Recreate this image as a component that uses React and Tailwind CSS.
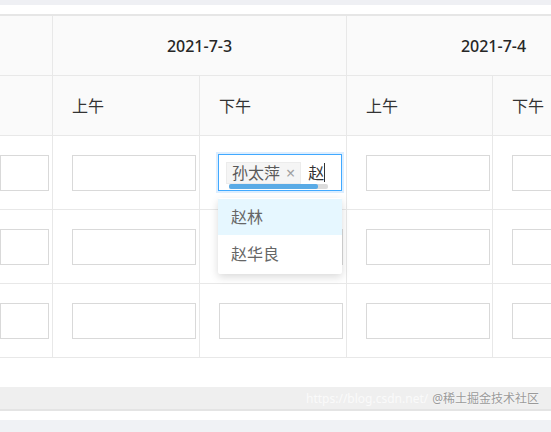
import React from "react";

const font = { fontFamily: '"Noto Sans", "Noto Sans CJK SC", sans-serif' };

function Input() {
  return <div className="w-[124px] h-[36px] border border-[#d9d9d9] bg-white" />;
}

function BodyCell({ children, last }) {
  return (
    <div className={`relative h-[74px] border-b border-[#e8e8e8] ${last ? "" : "border-r"} pl-[19px] pt-[19px] bg-white`}>
      {children}
    </div>
  );
}

function FirstCell() {
  return (
    <div className="h-[74px] border-b border-r border-[#e8e8e8] pt-[19px] bg-white flex justify-end pr-[3px]">
      <div className="w-[60px] h-[36px] border border-[#d9d9d9] bg-white" />
    </div>
  );
}

function SelectCell() {
  return (
    <div className="relative h-[74px] border-b border-r border-[#e8e8e8] pl-[18px] pt-[18px] bg-white">
      <div className="relative w-[124px] h-[37px] border border-[#40a9ff] shadow-[0_0_0_2px_rgba(24,144,255,0.15)] bg-white flex items-center pl-[7px]">
        <div className="h-[22px] px-[5px] bg-[#f5f5f5] border border-[#ececec] flex items-center gap-[6px] text-[16px] leading-none text-[#595959]">
          <span>孙太萍</span>
          <span className="text-[16px] text-[#a0a0a0]">×</span>
        </div>
        <span className="ml-[7px] text-[16px] leading-none text-[#333]">赵</span>
        <span className="w-[1px] h-[19px] bg-[#333]" />
        <div className="absolute left-[10px] top-[29px] w-[99px] h-[5px] rounded-[2px] bg-[#dcdcdc]" />
        <div className="absolute left-[10px] top-[29px] w-[89px] h-[5px] rounded-[2px] bg-[#5aabe6]" />
      </div>
      <div className="absolute left-[18px] top-[62px] w-[124px] bg-white rounded-[2px] shadow-[0_3px_8px_rgba(0,0,0,0.15)] z-10 py-[1px]">
        <div className="h-[36px] bg-[#e6f7ff] flex items-center pl-[13px] text-[16px] text-[#666]">赵林</div>
        <div className="h-[38px] flex items-center pl-[13px] text-[16px] text-[#666]">赵华良</div>
      </div>
    </div>
  );
}

export default function App() {
  return (
    <div className="w-[551px] h-[432px] overflow-hidden relative bg-white" style={font}>
      <div className="h-[5px] bg-[#eff0f4]" />
      <div className="h-[9px] bg-white" />
      <div className="border-t-2 border-[#e6e6e6] w-[700px]">
        <div className="grid grid-cols-[53px_147px_147px_146px_147px] w-[640px]">
          {/* header row 1 */}
          <div className="h-[60px] bg-[#fafafa] border-b border-r border-[#e8e8e8]" />
          <div className="col-span-2 h-[60px] bg-[#fafafa] border-b border-r border-[#e8e8e8] flex items-center justify-center text-[16px] font-medium text-[#262626]">
            2021-7-3
          </div>
          <div className="col-span-2 h-[60px] bg-[#fafafa] border-b border-[#e8e8e8] flex items-center justify-center text-[16px] font-medium text-[#262626]">
            2021-7-4
          </div>
          {/* header row 2 */}
          <div className="h-[60px] bg-[#fafafa] border-b border-r border-[#e8e8e8]" />
          <div className="h-[60px] bg-[#fafafa] border-b border-r border-[#e8e8e8] flex items-center pl-[19px] text-[16px] text-[#333]">上午</div>
          <div className="h-[60px] bg-[#fafafa] border-b border-r border-[#e8e8e8] flex items-center pl-[19px] text-[16px] text-[#333]">下午</div>
          <div className="h-[60px] bg-[#fafafa] border-b border-r border-[#e8e8e8] flex items-center pl-[19px] text-[16px] text-[#333]">上午</div>
          <div className="h-[60px] bg-[#fafafa] border-b border-[#e8e8e8] flex items-center pl-[19px] text-[16px] text-[#333]">下午</div>
          {/* body row 1 */}
          <FirstCell />
          <BodyCell><Input /></BodyCell>
          <SelectCell />
          <BodyCell><Input /></BodyCell>
          <BodyCell last><Input /></BodyCell>
          {/* body row 2 */}
          <FirstCell />
          <BodyCell><Input /></BodyCell>
          <BodyCell><Input /></BodyCell>
          <BodyCell><Input /></BodyCell>
          <BodyCell last><Input /></BodyCell>
          {/* body row 3 */}
          <FirstCell />
          <BodyCell><Input /></BodyCell>
          <BodyCell><Input /></BodyCell>
          <BodyCell><Input /></BodyCell>
          <BodyCell last><Input /></BodyCell>
        </div>
      </div>
      <div className="h-[29px] bg-white" />
      <div className="h-[22px] bg-[#efefef]" />
      <div className="h-[2px] bg-[#e4e4e4]" />
      <div className="h-[9px] bg-white" />
      <div className="h-[20px] bg-[#f0f2f5]" />
      <div className="absolute right-[12px] top-[393px] flex items-center gap-[4px] text-[12px] leading-none">
        <span className="text-white/70">https://blog.csdn.net/</span>
        <span className="text-[#9a9a9a] [text-shadow:0_0_2px_#fff]">@稀土掘金技术社区</span>
      </div>
    </div>
  );
}
